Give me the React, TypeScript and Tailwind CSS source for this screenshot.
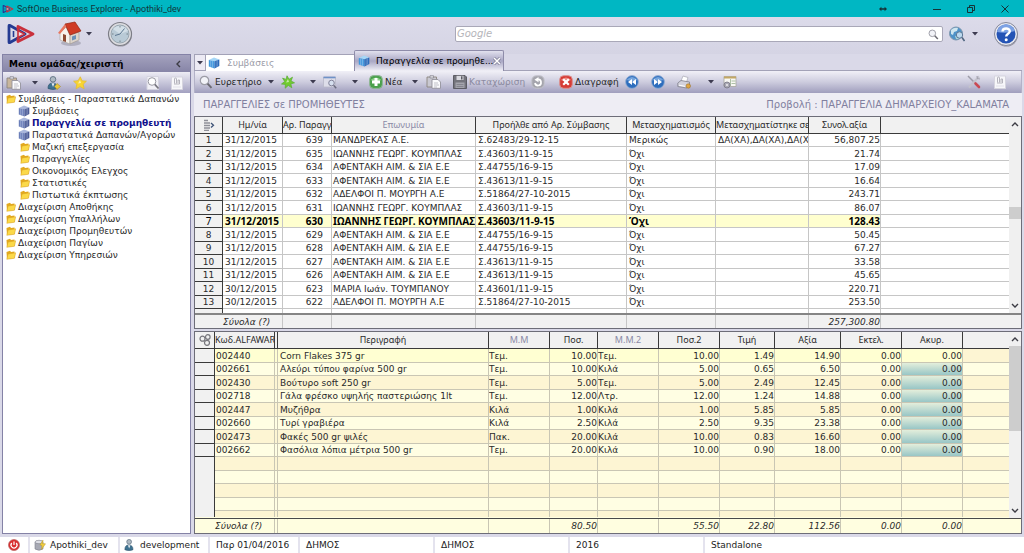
import { useState } from "react";
import type { ReactNode } from "react";

type Align = "left" | "right";
type Column = { label: string; width?: number; align?: Align; muted?: boolean };

const orderColumns: Column[] = [
  { label: "Ημ/νία", width: 60 },
  { label: "Αρ. Παραγγ", width: 49, align: "right" },
  { label: "Επωνυμία", width: 144, muted: true },
  { label: "Προήλθε από Αρ. Σύμβασης", width: 151 },
  { label: "Μετασχηματισμός", width: 89 },
  { label: "Μετασχηματίστηκε σε", width: 93 },
  { label: "Συνολ.αξία", width: 72, align: "right" },
  { label: "" },
];

const orders = [
  ["31/12/2015", "639", "ΜΑΝΔΡΕΚΑΣ Α.Ε.", "Σ.62483/29-12-15", "Μερικώς", "ΔΑ(ΧΑ),ΔΑ(ΧΑ),ΔΑ(Χ", "56,807.25"],
  ["31/12/2015", "635", "ΙΩΑΝΝΗΣ ΓΕΩΡΓ. ΚΟΥΜΠΛΑΣ", "Σ.43603/11-9-15", "Όχι", "", "21.74"],
  ["31/12/2015", "634", "ΑΦΕΝΤΑΚΗ ΑΙΜ. & ΣΙΑ Ε.Ε", "Σ.44755/16-9-15", "Όχι", "", "17.09"],
  ["31/12/2015", "633", "ΑΦΕΝΤΑΚΗ ΑΙΜ. & ΣΙΑ Ε.Ε", "Σ.43613/11-9-15", "Όχι", "", "16.64"],
  ["31/12/2015", "632", "ΑΔΕΛΦΟΙ Π. ΜΟΥΡΓΗ Α.Ε", "Σ.51864/27-10-2015", "Όχι", "", "243.71"],
  ["31/12/2015", "631", "ΙΩΑΝΝΗΣ ΓΕΩΡΓ. ΚΟΥΜΠΛΑΣ", "Σ.43603/11-9-15", "Όχι", "", "86.07"],
  ["31/12/2015", "630", "ΙΩΑΝΝΗΣ ΓΕΩΡΓ. ΚΟΥΜΠΛΑΣ", "Σ.43603/11-9-15", "Όχι", "", "128.43"],
  ["31/12/2015", "629", "ΑΦΕΝΤΑΚΗ ΑΙΜ. & ΣΙΑ Ε.Ε", "Σ.44755/16-9-15", "Όχι", "", "50.45"],
  ["31/12/2015", "628", "ΑΦΕΝΤΑΚΗ ΑΙΜ. & ΣΙΑ Ε.Ε", "Σ.44755/16-9-15", "Όχι", "", "67.27"],
  ["31/12/2015", "627", "ΑΦΕΝΤΑΚΗ ΑΙΜ. & ΣΙΑ Ε.Ε", "Σ.43613/11-9-15", "Όχι", "", "33.58"],
  ["31/12/2015", "626", "ΑΦΕΝΤΑΚΗ ΑΙΜ. & ΣΙΑ Ε.Ε", "Σ.43613/11-9-15", "Όχι", "", "45.65"],
  ["30/12/2015", "623", "ΜΑΡΙΑ Ιωάν. ΤΟΥΜΠΑΝΟΥ", "Σ.43601/11-9-15", "Όχι", "", "220.71"],
  ["30/12/2015", "622", "ΑΔΕΛΦΟΙ Π. ΜΟΥΡΓΗ Α.Ε", "Σ.51864/27-10-2015", "Όχι", "", "253.50"],
];

const lineColumns: Column[] = [
  { label: "Κωδ.ALFAWARI", width: 60 },
  { label: "", width: 3 },
  { label: "Περιγραφή", width: 211 },
  { label: "Μ.Μ", width: 61, muted: true },
  { label: "Ποσ.", width: 48, align: "right" },
  { label: "Μ.Μ.2", width: 61, muted: true },
  { label: "Ποσ.2", width: 61, align: "right" },
  { label: "Τιμή", width: 55, align: "right" },
  { label: "Αξία", width: 66, align: "right" },
  { label: "Εκτελ.", width: 61, align: "right" },
  { label: "Ακυρ.", width: 61, align: "right" },
  { label: "" },
];

const lines = [
  ["002440", "", "Corn Flakes 375 gr", "Τεμ.", "10.00", "Τεμ.", "10.00", "1.49", "14.90", "0.00", "0.00"],
  ["002661", "", "Αλεύρι τύπου φαρίνα 500 gr", "Τεμ.", "10.00", "Κιλά", "5.00", "0.65", "6.50", "0.00", "0.00"],
  ["002430", "", "Βούτυρο soft 250 gr", "Τεμ.", "5.00", "Τεμ.", "5.00", "2.49", "12.45", "0.00", "0.00"],
  ["002718", "", "Γάλα φρέσκο υψηλής παστεριώσης 1lt", "Τεμ.", "12.00", "Λτρ.", "12.00", "1.24", "14.88", "0.00", "0.00"],
  ["002447", "", "Μυζήθρα", "Κιλά", "1.00", "Κιλά", "1.00", "5.85", "5.85", "0.00", "0.00"],
  ["002660", "", "Τυρί γραβιέρα", "Κιλά", "2.50", "Κιλά", "2.50", "9.35", "23.38", "0.00", "0.00"],
  ["002473", "", "Φακές 500 gr ψιλές", "Πακ.", "20.00", "Κιλά", "10.00", "0.83", "16.60", "0.00", "0.00"],
  ["002662", "", "Φασόλια λόπια μέτρια 500 gr", "Τεμ.", "20.00", "Κιλά", "10.00", "0.90", "18.00", "0.00", "0.00"],
];

const tree = [
  { label: "Συμβάσεις - Παραστατικά Δαπανών", level: 0, icon: "folder" },
  { label: "Συμβάσεις", level: 1, icon: "cube" },
  { label: "Παραγγελία σε προμηθευτή", level: 1, icon: "cube", active: true },
  { label: "Παραστατικά Δαπανών/Αγορών", level: 1, icon: "cube" },
  { label: "Μαζική επεξεργασία", level: 1, icon: "folder" },
  { label: "Παραγγελίες", level: 1, icon: "folder" },
  { label: "Οικονομικός Ελεγχος", level: 1, icon: "folder" },
  { label: "Στατιστικές", level: 1, icon: "folder" },
  { label: "Πιστωτικά έκπτωσης", level: 1, icon: "folder" },
  { label: "Διαχείριση Αποθήκης", level: 0, icon: "folder" },
  { label: "Διαχείριση Υπαλλήλων", level: 0, icon: "folder" },
  { label: "Διαχείριση Προμηθευτών", level: 0, icon: "folder" },
  { label: "Διαχείριση Παγίων", level: 0, icon: "folder" },
  { label: "Διαχείριση Υπηρεσιών", level: 0, icon: "folder" },
];

/* ---------- icons ---------- */

function Logo({ className }: { className: string }) {
  return (
    <svg viewBox="0 0 28 20" className={className} fill="none" strokeLinejoin="round">
      <path d="M2 2 Q2 1 3 1.5 L18 10 L3 18.5 Q2 19 2 18 Z" stroke="#243a92" strokeWidth="2.8" />
      <path d="M11 6.5 V2.5 L26 10 L11 17.5 V13.5" stroke="#c9303c" strokeWidth="2.8" />
      <path d="M11 6.5 L17.5 10 L11 13.5 Z" fill="#e9dfea" stroke="#c9303c" strokeWidth="1.6" />
      <path d="M6.5 7 V13" stroke="#243a92" strokeWidth="1.6" />
    </svg>
  );
}

function HomeIcon() {
  return (
    <svg viewBox="0 0 26 26" className="h-[26px] w-[26px]">
      <ellipse cx="14" cy="22" rx="10" ry="3" fill="#8b8a99" opacity=".5" />
      <path d="M3 12 L9 6 L13 14 V23 L3 19 Z" fill="#f7f2ec" stroke="#aaa29b" strokeWidth=".6" />
      <path d="M13 14 L22 11 V19 L13 23 Z" fill="#ddd4cb" stroke="#9c948e" strokeWidth=".6" />
      <path d="M8 3 L18 1 L24 10 L13 14 Z" fill="#cf3b25" stroke="#94240f" strokeWidth=".7" />
      <path d="M8 3 L1 12 L3 13 L9 6 Z" fill="#e8765e" />
      <path d="M6 13 L9 14 V21 L6 20 Z" fill="#8d4a32" />
      <path d="M15 15.5 L19 14 V18 L15 19.5 Z" fill="#6b90b8" />
    </svg>
  );
}

function ClockIcon() {
  return (
    <svg viewBox="0 0 26 26" className="h-[26px] w-[26px]">
      <circle cx="13.5" cy="14" r="11.5" fill="#77767f" opacity=".6" />
      <circle cx="13" cy="13" r="11.5" fill="#dcdce0" stroke="#7c7d86" strokeWidth="1.2" />
      <circle cx="13" cy="13" r="9" fill="#b9cad6" stroke="#8c9aa5" strokeWidth=".8" />
      <path d="M6 8 A9 9 0 0 1 21 10 L13 13 Z" fill="#d3dfe7" />
      <path d="M13 13 L17.5 7.5 M13 13 L8 14.5" stroke="#5c7690" strokeWidth="1" />
      <path d="M13 5v1.5M13 19.5V21M5 13h1.5M19.5 13H21" stroke="#6d7882" strokeWidth=".9" />
    </svg>
  );
}

function HelpIcon() {
  return (
    <svg viewBox="0 0 26 26" className="h-[26px] w-[26px]">
      <circle cx="13.5" cy="14" r="11.5" fill="#6d6c7a" opacity=".6" />
      <circle cx="13" cy="13" r="11.5" fill="#e8e9f0" stroke="#85879a" />
      <circle cx="13" cy="13" r="9.5" fill="#2453b5" />
      <path d="M4 11 A9.2 9.2 0 0 1 22 10 Q13 13 4 11Z" fill="#7ea2e4" />
      <path d="M9.5 10.5 C9.5 6.5 17 6.5 16.8 10.3 C16.7 12.8 13.2 12.8 13.2 15.5" stroke="#fff" strokeWidth="2.4" fill="none" />
      <circle cx="13.2" cy="18.8" r="1.5" fill="#fff" />
    </svg>
  );
}

function GlobeIcon() {
  return (
    <svg viewBox="0 0 16 16" className="h-4 w-4">
      <circle cx="7" cy="7.5" r="6.5" fill="#4f93c8" stroke="#7e97ad" />
      <path d="M2 4 Q5 1 9 2 L8 5 L5 6 L4 9 L2 8Z" fill="#cfe6ef" />
      <path d="M6 10 L9 9 L10 13 L7 13Z" fill="#a9d3d8" />
      <circle cx="10.5" cy="9" r="3.2" fill="#bcd9ee" stroke="#5d7896" />
      <path d="M13 11.5 L15.5 15" stroke="#506680" strokeWidth="1.6" />
    </svg>
  );
}

function MagnifierIcon({ className = "h-[14px] w-[14px]" }: { className?: string }) {
  return (
    <svg viewBox="0 0 14 14" className={className} fill="none">
      <circle cx="5.5" cy="5.5" r="4.2" fill="#f2f3f8" stroke="#9c9ca6" strokeWidth="1.2" />
      <path d="M8.6 8.6 L12.5 12.8" stroke="#6b6a72" strokeWidth="1.9" />
    </svg>
  );
}

function PageSearchIcon() {
  return (
    <svg viewBox="0 0 14 14" className="h-[14px] w-[14px]" fill="none">
      <path d="M1 .5 H12.5 V13.5 H1Z" fill="#f1f0f6" stroke="#d5d4e0" />
      <circle cx="6" cy="5.5" r="3.8" fill="#fff" stroke="#9a9aa3" />
      <path d="M8.8 8.4 L12.5 12.5" stroke="#77767e" strokeWidth="1.7" />
    </svg>
  );
}

function ClipIcon() {
  return (
    <svg viewBox="0 0 14 14" className="h-[14px] w-[14px]" fill="none">
      <path d="M1.5 1 H12.5 V13.5 H1.5Z" fill="#f7f7fa" stroke="#d6d5df" />
      <path d="M4.5 7.5 V3 Q4.5 2 5.5 2 Q6.5 2 6.5 3 V7.5 M8 7 V4 H9.5 V8 H4" stroke="#aeadb7" strokeWidth=".9" />
      <path d="M3 11h8" stroke="#e2e1ea" />
    </svg>
  );
}

function PasteIcon({ muted = false }: { muted?: boolean }) {
  return (
    <svg viewBox="0 0 16 14" className="h-[14px] w-4 shrink-0" fill="none">
      <path d="M1 2 H10.5 V12 H1Z" fill={muted ? "#c9c8d1" : "#c8b69d"} stroke="#8d8780" strokeWidth=".9" />
      <path d="M4 .7 H7.5 V3 H4Z" fill="#dedde3" stroke="#85848e" strokeWidth=".7" />
      <path d="M6 4.5 H12 L14.5 7 V13.3 H6Z" fill="#fafafc" stroke="#94939d" strokeWidth=".9" />
      <path d="M8 8h4M8 10h5M8 12h3" stroke="#b3b2bb" strokeWidth=".8" />
    </svg>
  );
}

function UserIcon({ className = "h-[14px] w-[14px]", badge = true }: { className?: string; badge?: boolean }) {
  return (
    <svg viewBox="0 0 14 14" className={className}>
      <circle cx="6" cy="3.3" r="2.8" fill="#aeb9c2" stroke="#56697b" strokeWidth=".8" />
      <path d="M1 12.5 Q1 7 5.5 7 Q10.5 7 10.5 12.5 Q6 14.5 1 12.5Z" fill="#3e7291" stroke="#2c526c" strokeWidth=".7" />
      <path d="M4.5 7.2 L6 11 L7.5 7.2Z" fill="#e6edf1" />
      {badge && <path d="M10 7.5 L13.5 10.5 L10 13.5 L7.5 10.5Z" fill="#e8c83a" stroke="#a78b23" strokeWidth=".6" />}
    </svg>
  );
}

function StarIcon({ green = false }: { green?: boolean }) {
  return (
    <svg viewBox="0 0 14 14" className="h-[14px] w-[14px]">
      <path
        d={
          green
            ? "M6 .8 L8 4.3 L11.5 2.2 L10 6 L13.5 7.8 L9.8 8.9 L10.8 12.8 L7.3 10.4 L4.2 13.2 L4.4 9.4 L.5 9 L3.7 6.5 L1.6 3.2 L5.2 4.4Z"
            : "M7.3 .8 L9 4.8 L13.4 5.2 L10.2 8.2 L11.1 12.8 L7 10.6 L3 12.8 L3.8 8.3 L.6 5.2 L5.1 4.7Z"
        }
        fill={green ? "#72cc2e" : "#f8d531"}
        stroke={green ? "#5fae3c" : "#e3bb3a"}
        strokeWidth=".8"
      />
      <path d="M7 4 L8 7 L5 7.5Z" fill="#fff" opacity=".6" />
    </svg>
  );
}

function WindowSearchIcon() {
  return (
    <svg viewBox="0 0 14 14" className="h-[14px] w-[14px]" fill="none">
      <path d="M.5 2 H12.5 V12 H.5Z" fill="#dddde9" stroke="#b7b7c8" strokeWidth=".8" />
      <path d="M.5 2.5 H12.5" stroke="#6f92c8" strokeWidth="1.6" />
      <circle cx="8.5" cy="8" r="2.8" fill="#d6dfef" stroke="#83839a" />
      <path d="M10.6 10.2 L13.2 13.2" stroke="#6b6b80" strokeWidth="1.5" />
    </svg>
  );
}

function PlusIcon() {
  return (
    <svg viewBox="0 0 14 14" className="h-[14px] w-[14px] shrink-0">
      <rect x=".6" y=".6" width="12.8" height="12.8" rx="4" fill="#4aa04c" stroke="#8fb594" />
      <path d="M1.5 5 Q7 0 12.5 5 Q7 7.5 1.5 5Z" fill="#8bce88" />
      <path d="M5.5 3 H8.5 V5.5 H11 V8.5 H8.5 V11 H5.5 V8.5 H3 V5.5 H5.5Z" fill="#fff" />
    </svg>
  );
}

function FloppyIcon() {
  return (
    <svg viewBox="0 0 14 14" className="h-[14px] w-[14px] shrink-0">
      <path d="M.5 .5 H12 L13.5 2 V13.5 H.5Z" fill="#74747c" stroke="#5c5c64" />
      <path d="M3.5 .8 H10.5 V5 H3.5Z" fill="#d9d9df" />
      <path d="M8 1.3 H9.5 V4.4 H8Z" fill="#5c5c64" />
      <path d="M2.5 7.5 H11.5 V13 H2.5Z" fill="#a4a4ac" />
      <path d="M3.5 9.5h7M3.5 11.5h7" stroke="#7e7e86" strokeWidth=".8" />
    </svg>
  );
}

function UndoIcon() {
  return (
    <svg viewBox="0 0 14 14" className="h-[14px] w-[14px]" fill="none">
      <rect x=".8" y=".8" width="12.4" height="12.4" rx="4.5" fill="#a5a5ad" stroke="#c4c4cc" />
      <path d="M4 8 Q4.5 10.8 7.5 10.5 Q10.5 10 10 6.8 Q9.5 4 6.5 4.5" stroke="#fff" strokeWidth="1.7" />
      <path d="M7.5 2 V7.3 L3.5 4.7Z" fill="#fff" />
    </svg>
  );
}

function DeleteIcon() {
  return (
    <svg viewBox="0 0 14 14" className="h-[14px] w-[14px] shrink-0">
      <rect x=".7" y=".7" width="12.6" height="12.6" rx="4" fill="#d63b35" stroke="#dc8f8d" />
      <path d="M1.8 5 Q7 0 12.2 5 Q7 7 1.8 5Z" fill="#ee8d85" />
      <path d="M4.2 4.2 L9.8 9.8 M9.8 4.2 L4.2 9.8" stroke="#fff" strokeWidth="2.2" />
    </svg>
  );
}

function SkipIcon({ forward = false }: { forward?: boolean }) {
  return (
    <svg viewBox="0 0 14 14" className="h-[14px] w-[14px]">
      <circle cx="7" cy="7" r="6.4" fill="#2d6dbd" stroke="#94aed2" strokeWidth=".9" />
      <path d="M1.5 5 Q7 -1 12.5 5 Q7 7 1.5 5Z" fill="#76a5dd" />
      <path d={forward ? "M3 4 L7 7 L3 10Z M7 4 L11 7 L7 10Z" : "M7 4 L3 7 L7 10Z M11 4 L7 7 L11 10Z"} fill="#fff" />
    </svg>
  );
}

function PrinterIcon() {
  return (
    <svg viewBox="0 0 14 14" className="h-[14px] w-[14px]">
      <path d="M4 6 L6 1 L11 2.5 L9.5 7Z" fill="#fff" stroke="#a7a7b3" strokeWidth=".7" />
      <path d="M.8 8 L4 5.5 L12.5 7 V10.5 L9.5 13 L.8 11.5Z" fill="#d3d2dc" stroke="#82818d" strokeWidth=".8" />
      <path d="M2 10.2 L8 11.3" stroke="#fff" />
      <circle cx="11.3" cy="11" r="2.2" fill="#e0a544" stroke="#9b7229" strokeWidth=".6" />
    </svg>
  );
}

function FormIcon() {
  return (
    <svg viewBox="0 0 14 14" className="h-[14px] w-[14px]">
      <path d="M1 1.5 H13 V11.5 H1Z" fill="#f8f8f4" stroke="#a7a69f" strokeWidth=".8" />
      <path d="M1 1.5 H13 V3.5 H1Z" fill="#c3a765" />
      <path d="M7.5 4 V11 M8.5 6h4M8.5 8.5h4" stroke="#9bb393" strokeWidth=".8" />
      <circle cx="4" cy="10" r="3" fill="#aaa9b5" stroke="#777683" strokeWidth=".8" />
      <circle cx="4" cy="10" r="1" fill="#eee" />
    </svg>
  );
}

function ToolsIcon() {
  return (
    <svg viewBox="0 0 14 14" className="h-[14px] w-[14px]" fill="none">
      <path d="M1 1 L7.5 7.5" stroke="#9d9ca8" strokeWidth="1.5" />
      <path d="M12 1.5 L2 12.5" stroke="#c3c2cc" strokeWidth="2" />
      <path d="M8.5 8.5 L12 12" stroke="#c94a53" strokeWidth="2.6" strokeLinecap="round" />
      <path d="M10 1 L10.5 3.5 L13 4" stroke="#a5a4b0" strokeWidth="1.2" />
    </svg>
  );
}

function FolderIcon() {
  return (
    <svg viewBox="0 0 10 10" className="h-[10px] w-[10px] shrink-0">
      <path d="M.5 2 L4 .8 L5 2 L8.5 1.5 V8 L1 9Z" fill="#e2a81e" />
      <path d="M2 4 L9.7 2.8 L8.4 8.3 L.8 9.3Z" fill="#fbd949" stroke="#d9a020" strokeWidth=".5" />
    </svg>
  );
}

function CubeIcon({ bright = false }: { bright?: boolean }) {
  return (
    <svg viewBox="0 0 12 12" className="h-3 w-3 shrink-0">
      <path d="M.8 3 L6 .6 L11.3 2.4 L6.5 4.3Z" fill={bright ? "#a6d6f6" : "#a9b7dc"} />
      <path d="M.8 3 L6.5 4.3 V11.5 L.8 9.4Z" fill={bright ? "#3f97dd" : "#6b7fb9"} />
      <path d="M6.5 4.3 L11.3 2.4 V9 L6.5 11.5Z" fill={bright ? "#1f62b6" : "#41528f"} />
      <path d="M2.7 3.6 V10 M4.6 4 V10.7 M8.1 3.8 V10.5 M9.7 3.2 V9.7" stroke="#d5def2" strokeWidth=".4" fill="none" />
    </svg>
  );
}

function Chevron({ dir }: { dir: "up" | "down" | "left" }) {
  const d = { up: "M1 6 L4 3 L7 6", down: "M1 2 L4 5 L7 2", left: "M6 1 L3 4 L6 7" }[dir];
  return (
    <svg viewBox="0 0 8 8" className="h-2 w-2" fill="none" stroke="#3c3c44" strokeWidth="1.4">
      <path d={d} />
    </svg>
  );
}

function Caret() {
  return (
    <svg viewBox="0 0 6 4" className="h-1 w-[6px]" fill="#3d3b50">
      <path d="M0 0 H6 L3 3.6Z" />
    </svg>
  );
}

function RowsIcon() {
  return (
    <svg viewBox="0 0 12 12" className="h-3 w-3" fill="none">
      <path d="M1 1.5h4M1 4h6M1 6.5h6M1 9h6M1 11.3h5" stroke="#8f9098" strokeWidth="1.3" />
      <path d="M8 4 L10.5 6.3 L8 8.6" stroke="#3e5377" strokeWidth="1.3" />
    </svg>
  );
}

function GearsIcon() {
  return (
    <svg viewBox="0 0 12 12" className="h-3 w-3" fill="none" stroke="#77777d" strokeWidth="1.2">
      <circle cx="3.5" cy="4.7" r="2.5" />
      <circle cx="8.8" cy="3" r="2.3" />
      <circle cx="8" cy="8.8" r="2.5" />
    </svg>
  );
}

/* ---------- small parts ---------- */

function IconButton({ label, className = "", children }: { label: string; className?: string; children: ReactNode }) {
  return (
    <button type="button" aria-label={label} className={`flex h-[14px] w-[14px] shrink-0 items-center justify-center ${className}`}>
      {children}
    </button>
  );
}

function CaretButton({ className = "" }: { className?: string }) {
  return (
    <button type="button" aria-label="Περισσότερα" className={`flex h-[14px] w-3 shrink-0 items-center justify-center ${className}`}>
      <Caret />
    </button>
  );
}

function TextButton({ className = "", children }: { className?: string; children: ReactNode }) {
  return (
    <button type="button" className={`flex shrink-0 items-center gap-[2px] whitespace-nowrap ${className}`}>
      {children}
    </button>
  );
}

function Scrollbar({ thumb }: { thumb: string }) {
  return (
    <div className="flex w-3 shrink-0 flex-col items-center bg-[#f0f0f0]">
      <button type="button" aria-label="Πάνω" className="flex h-[14px] w-full items-center justify-center">
        <Chevron dir="up" />
      </button>
      <div className="flex w-full flex-1 flex-col">
        <div className={`w-full bg-[#cdcdcd] ${thumb}`} />
      </div>
      <button type="button" aria-label="Κάτω" className="flex h-[14px] w-full items-center justify-center">
        <Chevron dir="down" />
      </button>
    </div>
  );
}

function Columns({ first, columns }: { first: number; columns: Column[] }) {
  return (
    <colgroup>
      <col style={{ width: first }} />
      {columns.map((c, i) => (
        <col key={i} style={c.width ? { width: c.width } : undefined} />
      ))}
    </colgroup>
  );
}

function HeadRow({ icon, columns }: { icon: ReactNode; columns: Column[] }) {
  return (
    <thead>
      <tr className="h-[17px] bg-[#f1f1f1] font-['Noto_Sans',sans-serif]">
        <th className="border-r border-b border-[#3a3a3a] p-0">
          <div className="flex justify-center">{icon}</div>
        </th>
        {columns.map((c, i) => (
          <th
            key={i}
            className={`overflow-hidden border-b border-[#3a3a3a] p-0 font-normal whitespace-nowrap ${
              c.width ? "border-r" : ""
            } ${c.muted ? "text-[#8a8aa6]" : ""}`}
          >
            <div className="flex justify-center-safe">{c.label}</div>
          </th>
        ))}
      </tr>
    </thead>
  );
}

const tableClass = "w-full table-fixed border-separate border-spacing-0 leading-[12px]";

function OrdersGrid() {
  const [selected, setSelected] = useState(6);
  return (
    <section className="border border-[#6d6d78] bg-white">
      <div className="flex">
        <div className="min-w-0 flex-1">
          <table className={tableClass}>
            <Columns first={28} columns={orderColumns} />
            <HeadRow icon={<RowsIcon />} columns={orderColumns} />
            <tbody>
              {orders.map((row, r) => {
                const on = r === selected;
                return (
                  <tr
                    key={r}
                    onClick={() => setSelected(r)}
                    className={`odd:h-[13px] even:h-[14px] ${on ? "font-['Noto_Sans',sans-serif] text-[10px] font-bold text-black" : ""}`}
                  >
                    <th className="border-r border-b border-[#3a3a3a] bg-[#f1f1f1] p-0 font-normal">{r + 1}</th>
                    {orderColumns.map((c, i) => (
                      <td
                        key={i}
                        className={`overflow-hidden border-b border-[#c6c6c6] p-0 whitespace-nowrap ${c.width ? "border-r" : ""} ${
                          c.align === "right" ? (i === 1 ? "pr-2 text-right" : "text-right") : i === 2 ? "pl-px" : "pl-[2px]"
                        } ${on && c.width ? "bg-[#ffffcf]" : ""}`}
                      >
                        {row[i]}
                      </td>
                    ))}
                  </tr>
                );
              })}
              <tr className="h-[4px]">
                <td className="border-r border-[#3a3a3a] bg-[#f1f1f1] p-0" />
                {orderColumns.map((c, i) => (
                  <td key={i} className={`border-[#c6c6c6] p-0 ${c.width ? "border-r" : ""}`} />
                ))}
              </tr>
            </tbody>
          </table>
        </div>
        <Scrollbar thumb="mt-[76px] h-3" />
      </div>
      <table className={`${tableClass} border-t-2 border-[#858585] bg-[#f1f1f1] italic`}>
        <Columns first={28} columns={orderColumns} />
        <tbody>
          <tr className="h-[13px]">
            <td className="p-0" />
            {orderColumns.map((c, i) => (
              <td key={i} className={`border-[#c6c6c6] p-0 whitespace-nowrap ${c.width ? "border-r" : ""} ${i === 6 ? "text-right" : ""}`}>
                {i === 0 ? "Σύνολα (?)" : i === 6 ? "257,300.80" : ""}
              </td>
            ))}
          </tr>
        </tbody>
      </table>
    </section>
  );
}

const lineTotals = ["Σύνολα (?)", "", "", "", "80.50", "", "55.50", "22.80", "112.56", "0.00", "0.00", ""];

function LinesGrid() {
  const blank = ["a", "b", "c", "d", "e"];
  return (
    <section className="mt-[2px] flex flex-1 flex-col border border-[#6d6d78] bg-[#fffee0]">
      <div className="flex flex-1">
        <div className="min-w-0 flex-1">
          <table className={tableClass}>
            <Columns first={20} columns={lineColumns} />
            <HeadRow icon={<GearsIcon />} columns={lineColumns} />
            <tbody>
              {lines.map((row, r) => (
                <tr key={row[0]} className="odd:h-[14px] odd:bg-[#fdf5d3] even:h-[13px] even:bg-[#fffee3]">
                  <th className="border-r border-b border-[#3a3a3a] bg-[#f1f1f1] p-0" />
                  {lineColumns.map((c, i) => (
                    <td
                      key={i}
                      className={`overflow-hidden border-b border-[#c9c6b4] p-0 whitespace-nowrap ${c.width ? "border-r" : ""} ${
                        c.align === "right" ? "text-right" : i === 0 ? "pl-px" : i === 2 ? "pl-[2px]" : ""
                      } ${i === 10 && r > 0 ? "bg-linear-to-b from-[#e3eedb] to-[#98c6c6]" : r === 0 && c.width ? "bg-[#ffffd2]" : ""}`}
                    >
                      {row[i]}
                    </td>
                  ))}
                </tr>
              ))}
              {blank.map((key, r) => (
                <tr
                  key={key}
                  className={r === 4 ? "h-[6px] bg-[#fdf5d3]" : "odd:h-[14px] odd:bg-[#fdf5d3] even:h-[13px] even:bg-[#fffee3]"}
                >
                  <td className="border-r border-[#3a3a3a] bg-[#f1f1f1] p-0" />
                  {lineColumns.map((c, i) => (
                    <td key={i} className={`border-[#c9c6b4] p-0 ${r === 4 ? "" : "border-b"} ${c.width ? "border-r" : ""}`} />
                  ))}
                </tr>
              ))}
            </tbody>
          </table>
        </div>
        <Scrollbar thumb="h-[85px]" />
      </div>
      <table className={`${tableClass} border-t border-[#4a4a4a] italic`}>
        <Columns first={20} columns={lineColumns} />
        <tbody>
          <tr className="h-[14px]">
            <td className="p-0" />
            {lineColumns.map((c, i) => (
              <td
                key={i}
                className={`border-[#c9c6b4] p-0 whitespace-nowrap ${c.width ? "border-r" : ""} ${c.align === "right" ? "text-right" : ""}`}
              >
                {lineTotals[i]}
              </td>
            ))}
          </tr>
        </tbody>
      </table>
    </section>
  );
}

function Sidebar() {
  return (
    <aside className="flex w-[189px] shrink-0 flex-col border border-[#8482a6] bg-white">
      <div className="flex h-[17px] items-center justify-between bg-linear-to-b from-[#a4a2be] to-[#8785a7] pr-2 pl-[6px]">
        <h2 className="font-bold text-black">Menu ομάδας/χειριστή</h2>
        <button type="button" aria-label="Σύμπτυξη">
          <Chevron dir="left" />
        </button>
      </div>
      <div className="flex h-[21px] shrink-0 items-center bg-linear-to-b from-[#eeedf5] to-[#a3a1c0] pl-1">
        <IconButton label="Επικόλληση"><PasteIcon /></IconButton>
        <CaretButton className="ml-2" />
        <IconButton label="Χρήστης" className="ml-[6px]"><UserIcon /></IconButton>
        <IconButton label="Αγαπημένα" className="ml-3"><StarIcon /></IconButton>
        <IconButton label="Εύρεση" className="mr-2 ml-auto"><PageSearchIcon /></IconButton>
        <IconButton label="Συνημμένα" className="mr-[6px] ml-[2px]"><ClipIcon /></IconButton>
      </div>
      <ul className="pl-[3px]">
        {tree.map((item) => (
          <li key={item.label} className={item.level === 1 ? (item.icon === "cube" ? "pl-3" : "pl-[14px]") : ""}>
            <a
              href="#"
              className={`flex h-3 items-center gap-[2px] leading-[12px] whitespace-nowrap ${item.active ? "font-bold text-[#10108c]" : ""}`}
            >
              {item.icon === "cube" ? <CubeIcon /> : <FolderIcon />}
              {item.label}
            </a>
          </li>
        ))}
      </ul>
    </aside>
  );
}

function Toolbar() {
  return (
    <div className="flex h-[22px] shrink-0 items-center border-x border-[#b3b2c8] bg-linear-to-b from-[#f1f0f7] via-[#cdccde] to-[#a09ebd] pr-[14px] pl-1">
      <TextButton className="w-[66px]"><MagnifierIcon />Ευρετήριο</TextButton>
      <CaretButton />
      <IconButton label="Ενέργειες" className="ml-1"><StarIcon green /></IconButton>
      <CaretButton className="ml-3" />
      <IconButton label="Προβολή" className="ml-1"><WindowSearchIcon /></IconButton>
      <CaretButton className="ml-3" />
      <TextButton className="ml-2 w-[36px]"><PlusIcon />Νέα</TextButton>
      <CaretButton className="ml-1" />
      <IconButton label="Αντιγραφή" className="ml-[6px]"><PasteIcon muted /></IconButton>
      <TextButton className="ml-3 w-[70px] text-[#8b8aa0]"><FloppyIcon />Καταχώριση</TextButton>
      <IconButton label="Αναίρεση" className="ml-2"><UndoIcon /></IconButton>
      <TextButton className="ml-[14px] w-[58px]"><DeleteIcon />Διαγραφή</TextButton>
      <IconButton label="Προηγούμενο" className="ml-2"><SkipIcon /></IconButton>
      <IconButton label="Επόμενο" className="ml-3"><SkipIcon forward /></IconButton>
      <IconButton label="Εκτύπωση" className="ml-3"><PrinterIcon /></IconButton>
      <CaretButton className="ml-[14px]" />
      <IconButton label="Φόρμα" className="ml-[6px]"><FormIcon /></IconButton>
      <IconButton label="Εργαλεία" className="ml-auto"><ToolsIcon /></IconButton>
      <IconButton label="Συνημμένα" className="ml-3"><ClipIcon /></IconButton>
    </div>
  );
}

function StatusBar() {
  const cell = "flex h-full shrink-0 items-center border-l-2 border-[#e4e3ee] bg-white";
  return (
    <footer className="mt-[3px] flex h-4 shrink-0 items-center bg-white text-[#222]">
      <div className="flex w-[28px] justify-center">
        <svg viewBox="0 0 12 12" className="h-3 w-3" fill="none">
          <circle cx="6" cy="6" r="5.5" fill="#d92c2c" stroke="#b96464" strokeWidth=".7" />
          <path d="M3.8 4 A3 3 0 1 0 8.2 4 M6 2.4 V6" stroke="#fff" strokeWidth="1.2" />
        </svg>
      </div>
      <div className={`${cell} w-[90px] gap-1 pl-1`}>
        <svg viewBox="0 0 12 12" className="h-3 w-3">
          <path d="M1 3 V10 Q5 12.5 9 10 V3Z" fill="#a7a9b4" stroke="#7e808c" strokeWidth=".6" />
          <ellipse cx="5" cy="3" rx="4" ry="1.7" fill="#dedfe6" stroke="#7e808c" strokeWidth=".6" />
          <path d="M6 6 L9 1 L8.6 4.5 L11.5 4.8 L7.5 10.5 L8 6.8Z" fill="#f0cd3b" stroke="#bb992a" strokeWidth=".5" />
        </svg>
        Apothiki_dev
      </div>
      <div className={`${cell} w-[90px] gap-1 pl-1`}>
        <UserIcon className="h-3 w-3" badge={false} />
        development
      </div>
      <div className={`${cell} w-[90px] pl-[6px]`}>Παρ 01/04/2016</div>
      <div className={`${cell} w-[135px] pl-[6px]`}>ΔΗΜΟΣ</div>
      <div className={`${cell} w-[135px] pl-[6px]`}>ΔΗΜΟΣ</div>
      <div className={`${cell} w-[135px] pl-[6px]`}>2016</div>
      <div className={`${cell} pl-[6px]`}>Standalone</div>
    </footer>
  );
}

export default function App() {
  return (
    <div className="flex min-h-screen flex-col overflow-hidden bg-[#dad9e8] font-['DejaVu_Sans',Verdana,sans-serif] text-[9px] leading-[12px] text-[#2a2a2a]">
      <header className="flex h-[17px] shrink-0 items-center bg-[#00b7c3] pl-[2px] font-[Roboto,sans-serif] text-[#12363b]">
        <Logo className="mr-[3px] h-2 w-3" />
        <h1>SoftOne Business Explorer - Apothiki_dev</h1>
        <svg viewBox="0 0 10 6" className="mr-[46px] ml-auto h-[6px] w-[8px]" fill="#153337">
          <path d="M0 3 L3 .3 V2.2 H7 V.3 L10 3 L7 5.7 V3.8 H3 V5.7Z" />
        </svg>
        <button type="button" aria-label="Ελαχιστοποίηση" className="mr-[26px]">
          <svg viewBox="0 0 8 8" className="h-2 w-2" stroke="#153337"><path d="M0 4.5h8" /></svg>
        </button>
        <button type="button" aria-label="Επαναφορά" className="mr-[26px]">
          <svg viewBox="0 0 8 8" className="h-2 w-2" fill="none" stroke="#153337"><path d="M.5 2.5h5v5h-5zM2.5 2.5v-2h5v5h-2" /></svg>
        </button>
        <button type="button" aria-label="Κλείσιμο" className="mr-[15px]">
          <svg viewBox="0 0 8 8" className="h-2 w-2" fill="none" stroke="#153337"><path d="M.5 .5l7 7M7.5 .5l-7 7" /></svg>
        </button>
      </header>

      <div className="flex h-[37px] shrink-0 items-start bg-linear-to-b from-[#dcdbea] to-[#d5d4e4] pt-1 pr-[5px] pl-[7px]">
        <div className="flex h-[26px] flex-1 items-center">
          <Logo className="h-5 w-7" />
          <button type="button" aria-label="Αρχική" className="ml-[22px]"><HomeIcon /></button>
          <CaretButton />
          <button type="button" aria-label="Ρολόι" className="ml-3"><ClockIcon /></button>
          <form className="ml-auto flex h-4 w-[488px] items-center rounded-[2px] border border-[#a9a8b8] bg-white pr-[3px]">
            <input
              aria-label="Google"
              placeholder="Google"
              className="min-w-0 flex-1 pl-px text-[10px] italic outline-none placeholder:text-[#b5b5ba]"
            />
            <button type="button" aria-label="Αναζήτηση"><MagnifierIcon className="h-[11px] w-[11px]" /></button>
          </form>
          <button type="button" aria-label="Αναζήτηση στο διαδίκτυο" className="ml-[6px]"><GlobeIcon /></button>
          <CaretButton className="ml-1" />
          <button type="button" aria-label="Βοήθεια" className="ml-3"><HelpIcon /></button>
        </div>
      </div>

      <div className="flex flex-1 gap-[3px] pr-[2px] pl-[2px]">
        <Sidebar />
        <main className="flex min-w-0 flex-1 flex-col">
          <div className="-mt-1 flex h-[21px] shrink-0 items-end">
            <button type="button" aria-label="Καρτέλες" className="flex h-[17px] w-3 items-center justify-center border border-[#a3a2b7] bg-[#eceaf4]">
              <Caret />
            </button>
            <button type="button" className="flex h-[17px] w-[148px] items-center gap-[7px] border-t border-[#a3a2b7] bg-white pl-[2px] text-[#9b9ba7]">
              <CubeIcon bright />
              Συμβάσεις
            </button>
            <div className="flex h-[21px] w-[150px] items-center rounded-t-[2px] border border-b-0 border-[#8e8ca9] bg-linear-to-b from-[#e2e1ee] via-[#a9a7c4] to-[#f1f0f7] pr-[5px] pl-[3px]">
              <button type="button" className="flex flex-1 items-center gap-[6px] whitespace-nowrap text-black">
                <CubeIcon bright />
                Παραγγελία σε προμηθε...
              </button>
              <button type="button" aria-label="Κλείσιμο καρτέλας">
                <svg viewBox="0 0 8 8" className="h-2 w-2" fill="none">
                  <path d="M1 1l6 6M7 1l-6 6" stroke="#6c6a85" strokeWidth="2.6" />
                  <path d="M1 1l6 6M7 1l-6 6" stroke="#fff" strokeWidth="1.6" />
                </svg>
              </button>
            </div>
            <div className="flex-1 self-stretch border-b border-[#a3a2b7]" />
          </div>
          <Toolbar />
          <div className="flex h-[23px] shrink-0 items-center justify-between bg-[#eeedf4] pr-[13px] pl-[9px] text-[10px] text-[#81809f]">
            <h2>ΠΑΡΑΓΓΕΛΙΕΣ σε ΠΡΟΜΗΘΕΥΤΕΣ</h2>
            <p>Προβολή : ΠΑΡΑΓΓΕΛΙΑ ΔΗΜΑΡΧΕΙΟΥ_KALAMATA</p>
          </div>
          <OrdersGrid />
          <LinesGrid />
        </main>
      </div>
      <StatusBar />
    </div>
  );
}
